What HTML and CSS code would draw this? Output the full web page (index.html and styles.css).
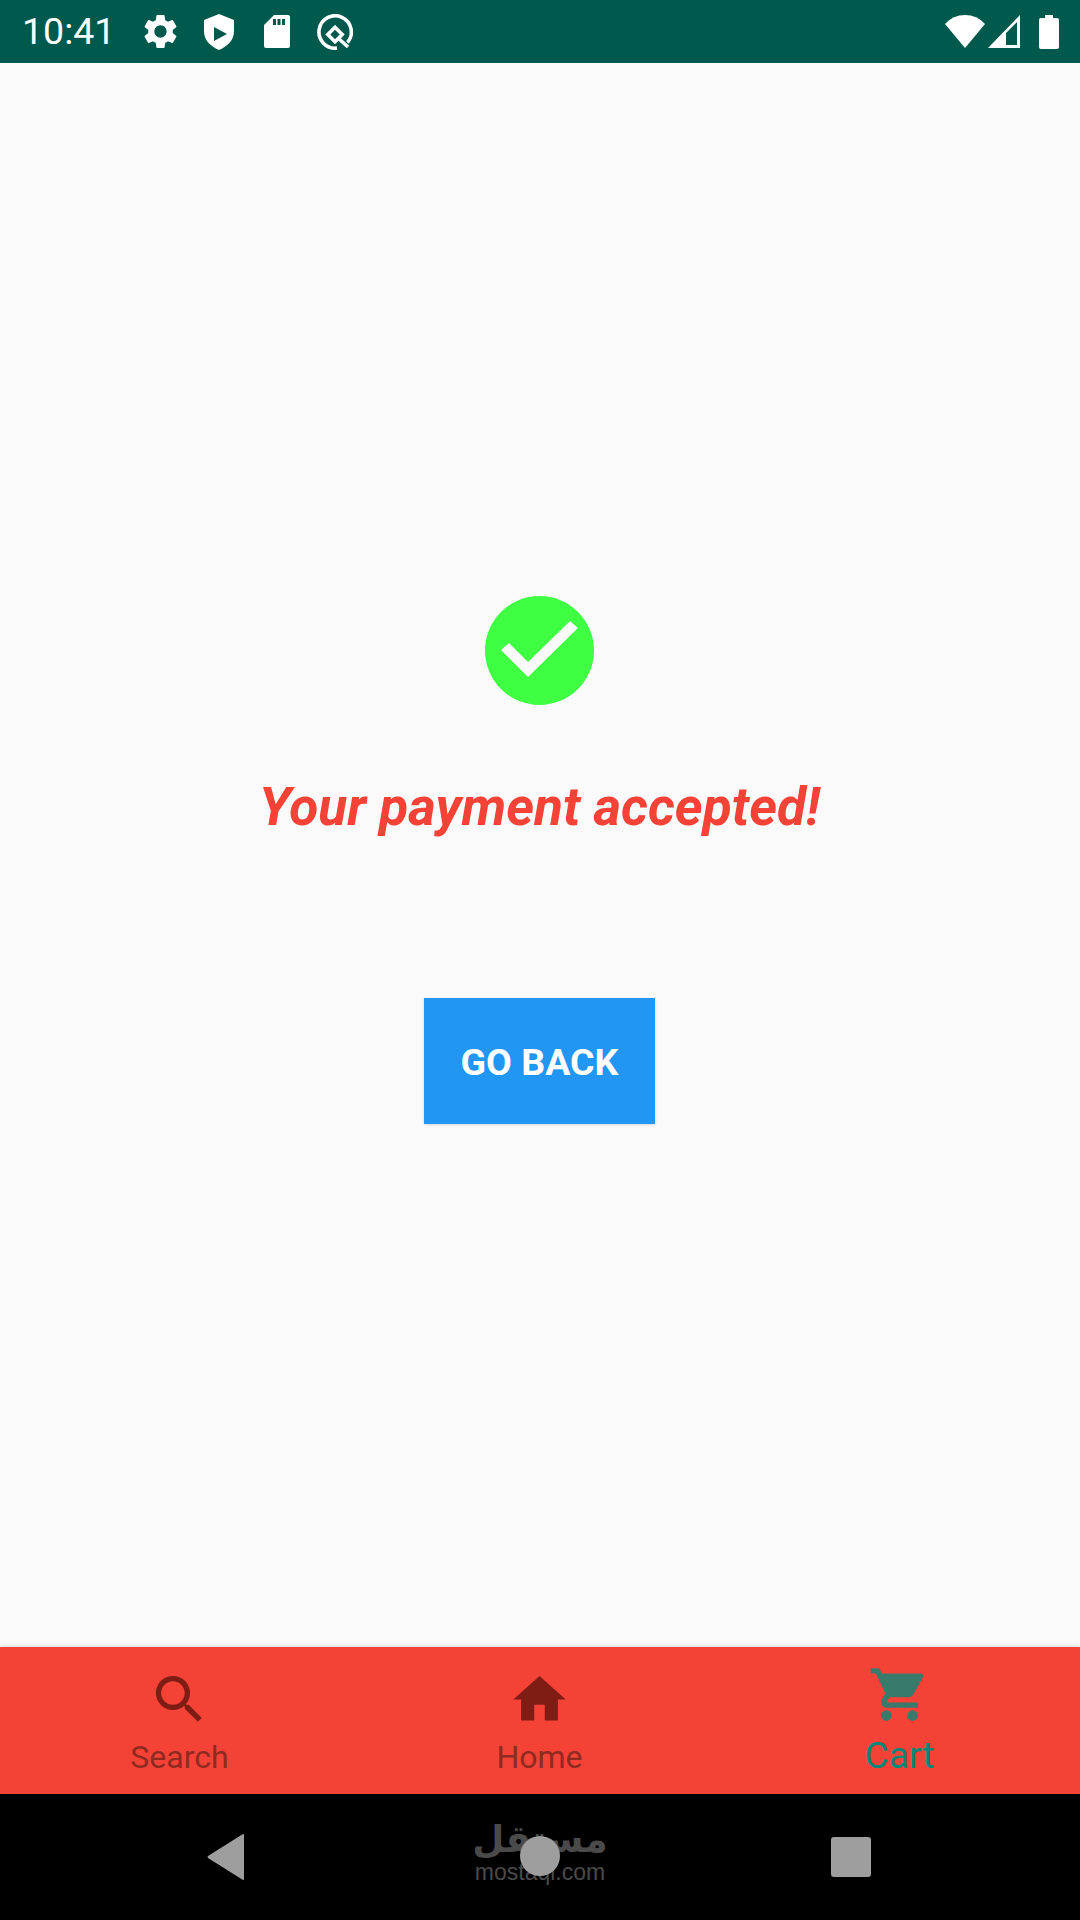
FILE: index.html
```html
<!DOCTYPE html>
<html lang="en">
<head>
  <meta charset="UTF-8">
  <meta name="viewport" content="width=device-width, initial-scale=1.0">
  <title>Payment accepted</title>
  <link rel="stylesheet" href="styles.css">
</head>
<body>
  <div class="screen">
    <div class="status-bar">
      <span class="clock">10:41</span>
      <svg class="ic-gear" viewBox="0 0 24 24"><path d="M19.14 12.94c.04-.3.06-.61.06-.94 0-.32-.02-.64-.07-.94l2.03-1.58c.18-.14.23-.41.12-.61l-1.92-3.32c-.12-.22-.37-.29-.59-.22l-2.39.96c-.5-.38-1.03-.7-1.62-.94l-.36-2.54c-.04-.24-.24-.41-.48-.41h-3.84c-.24 0-.43.17-.47.41l-.36 2.54c-.59.24-1.13.57-1.62.94l-2.39-.96c-.22-.08-.47 0-.59.22L2.74 8.87c-.12.21-.08.47.12.61l2.03 1.58c-.05.3-.09.63-.09.94s.02.64.07.94l-2.03 1.58c-.18.14-.23.41-.12.61l1.92 3.32c.12.22.37.29.59.22l2.39-.96c.5.38 1.03.7 1.62.94l.36 2.54c.05.24.24.41.48.41h3.84c.24 0 .44-.17.47-.41l.36-2.54c.59-.24 1.13-.56 1.62-.94l2.39.96c.22.08.47 0 .59-.22l1.92-3.32c.12-.22.07-.47-.12-.61l-2.01-1.58zM12 15.6c-1.98 0-3.6-1.62-3.6-3.6s1.62-3.6 3.6-3.6 3.6 1.62 3.6 3.6-1.62 3.6-3.6 3.6z"/></svg>
      <svg class="ic-shield" viewBox="0 0 30 36"><path fill-rule="evenodd" d="M15 0L30 6V17C30 26 24 32 15 36C6 32 0 26 0 17V6ZM10 13V27L23 20Z"/></svg>
      <svg class="ic-sd" viewBox="0 0 26 33"><path fill-rule="evenodd" d="M10 0H24Q26 0 26 2V31Q26 33 24 33H2Q0 33 0 31V10ZM9 4V10H12V4ZM13.5 4V10H16.5V4ZM18 4V10H21V4Z"/></svg>
      <svg class="ic-q" viewBox="0 0 36 36"><path class="q-line" d="M30.5 28.5A16.2 16.2 0 1 0 20 34.1"/><path class="q-line" d="M10.8 20.5L18 13.3L25.2 20.5L18 27.7ZM21 24L31 33"/></svg>
      <span class="spacer"></span>
      <svg class="ic-wifi" viewBox="0 0 40 33"><path d="M20 33L0 9Q8 0 20 0T40 9Z"/></svg>
      <svg class="ic-signal" viewBox="0 0 32 33"><path fill-rule="evenodd" d="M32 0V33H0ZM29 7L18 18V30H29Z"/></svg>
      <svg class="ic-battery" viewBox="0 0 20 34"><path d="M6 0H14V3H18Q20 3 20 5V32Q20 34 18 34H2Q0 34 0 32V5Q0 3 2 3H6Z"/></svg>
    </div>

    <main class="content">
      <svg class="ok-icon" viewBox="0 0 109 109">
        <circle cx="54.5" cy="54.5" r="54.5"/>
        <path d="M16 54L24 47L43 66L85 25L93 32L43 81Z"/>
      </svg>
      <h1 class="message">Your payment accepted!</h1>
      <button class="back-btn">GO BACK</button>
    </main>

    <nav class="tabs">
      <div class="tab">
        <svg class="tab-icon" viewBox="0 0 24 24"><path d="M15.5 14h-.79l-.28-.27A6.471 6.471 0 0 0 16 9.5 6.5 6.5 0 1 0 9.5 16c1.61 0 3.09-.59 4.23-1.57l.27.28v.79l5 4.99L20.49 19l-4.99-5zm-6 0C7.01 14 5 11.99 5 9.5S7.01 5 9.5 5 14 7.01 14 9.5 11.99 14 9.5 14z"/></svg>
        <span class="tab-label">Search</span>
      </div>
      <div class="tab">
        <svg class="tab-icon" viewBox="0 0 24 24"><path d="M10 20v-6h4v6h5v-8h3L12 3 2 12h3v8z"/></svg>
        <span class="tab-label">Home</span>
      </div>
      <div class="tab active">
        <svg class="tab-icon" viewBox="0 0 24 24"><path d="M7 18c-1.1 0-1.99.9-1.99 2S5.9 22 7 22s2-.9 2-2-.9-2-2-2zM1 2v2h2l3.6 7.59-1.35 2.45c-.16.28-.25.61-.25.96 0 1.1.9 2 2 2h12v-2H7.42c-.14 0-.25-.11-.25-.25l.03-.12.9-1.63h7.45c.75 0 1.41-.41 1.75-1.03l3.58-6.49c.08-.14.12-.31.12-.48 0-.55-.45-1-1-1H5.21l-.94-2H1zm16 16c-1.1 0-1.99.9-1.99 2s.89 2 1.99 2 2-.9 2-2-.9-2-2-2z"/></svg>
        <span class="tab-label">Cart</span>
      </div>
    </nav>

    <div class="nav-bar">
      <svg class="nav-back" viewBox="0 0 37 46"><path d="M37 1V45Q37 46 36 46L1 24Q0 23 1 22L36 0Q37 0 37 1Z"/></svg>
      <span class="nav-recent"></span>
      <div class="watermark">
        <span class="wm-ar" dir="rtl" lang="ar">مستقل</span>
        <span class="wm-en">mostaql.com</span>
      </div>
      <span class="nav-home"></span>
    </div>
  </div>
</body>
</html>
```

FILE: styles.css
```css
*{box-sizing:border-box;margin:0;padding:0}
body{background:#fafafa;font-family:Roboto,sans-serif}
.screen{width:1080px;height:1920px;display:flex;flex-direction:column;overflow:hidden}

/* status bar */
.status-bar{height:63px;background:#00594d;display:flex;align-items:center;padding:0 21px 0 22px;color:#fff;flex:none}
.status-bar svg{fill:#fff;flex:none}
.clock{font-size:37.5px;width:87px;white-space:nowrap;margin-top:-1px}
.ic-gear{width:41px;height:41px;margin:0 0 0 31px}
.ic-shield{width:30px;height:36px;margin-left:23px}
.ic-sd{width:26px;height:33px;margin-left:30px}
.ic-q{width:36px;height:36px;margin-left:27px}
.status-bar .ic-q{fill:none}
.q-line{fill:none;stroke:#fff;stroke-width:3.6}
.spacer{flex:1}
.ic-wifi{width:40px;height:33px}
.ic-signal{width:32px;height:33px;margin-left:3px}
.ic-battery{width:20px;height:34px;margin-left:19px}

/* main */
.content{flex:1;display:flex;flex-direction:column;align-items:center;padding:533px 1px 0 0}
.ok-icon{width:109px;height:109px;flex:none}
.ok-icon circle{fill:#3fff42}
.ok-icon path{fill:#fafafa}
.message{font-size:53.2px;font-weight:700;font-style:italic;color:#f44336;line-height:58px;margin-top:73px;white-space:nowrap}
.back-btn{width:231px;height:126px;margin-top:162px;padding-top:2px;background:#2196f3;color:#fff;border:none;font-family:Roboto,sans-serif;font-size:37.5px;font-weight:700;box-shadow:0 1px 3px rgba(0,0,0,0.15)}

/* bottom tabs */
.tabs{height:147px;flex:none;background:#f44336;display:grid;grid-template-columns:repeat(3,1fr);box-shadow:0 -1px 4px rgba(0,0,0,0.12);position:relative}
.tab{display:flex;flex-direction:column;align-items:center;padding:21px 1px 0 0;color:#8f2a20}
.tab-icon{width:63px;height:63px;fill:#7f1d15;flex:none}
.tab-label{font-size:32px;line-height:38px;margin-top:7px}
.tab.active{padding-top:16px;color:#06877a}
.tab.active .tab-icon{fill:#3a7a6d}
.tab.active .tab-label{font-size:37px;line-height:42px;margin-top:9px}

/* android nav */
.nav-bar{height:126px;flex:none;background:#000;position:relative}
.nav-back{position:absolute;left:207px;top:40px;width:37px;height:46px;fill:#9e9e9e}
.nav-home{position:absolute;left:520px;top:42px;width:40px;height:40px;border-radius:50%;background:#9e9e9e}
.nav-recent{position:absolute;left:831px;top:43px;width:40px;height:40px;border-radius:3px;background:#9e9e9e}
.watermark{position:absolute;left:470px;top:24px;width:140px;display:flex;flex-direction:column;align-items:center;color:#4a4a4a}
.wm-ar{font-family:"DejaVu Sans",sans-serif;font-weight:700;font-size:37px;line-height:44px}
.wm-en{font-family:"Liberation Sans",sans-serif;font-size:23px;line-height:20px}
```
